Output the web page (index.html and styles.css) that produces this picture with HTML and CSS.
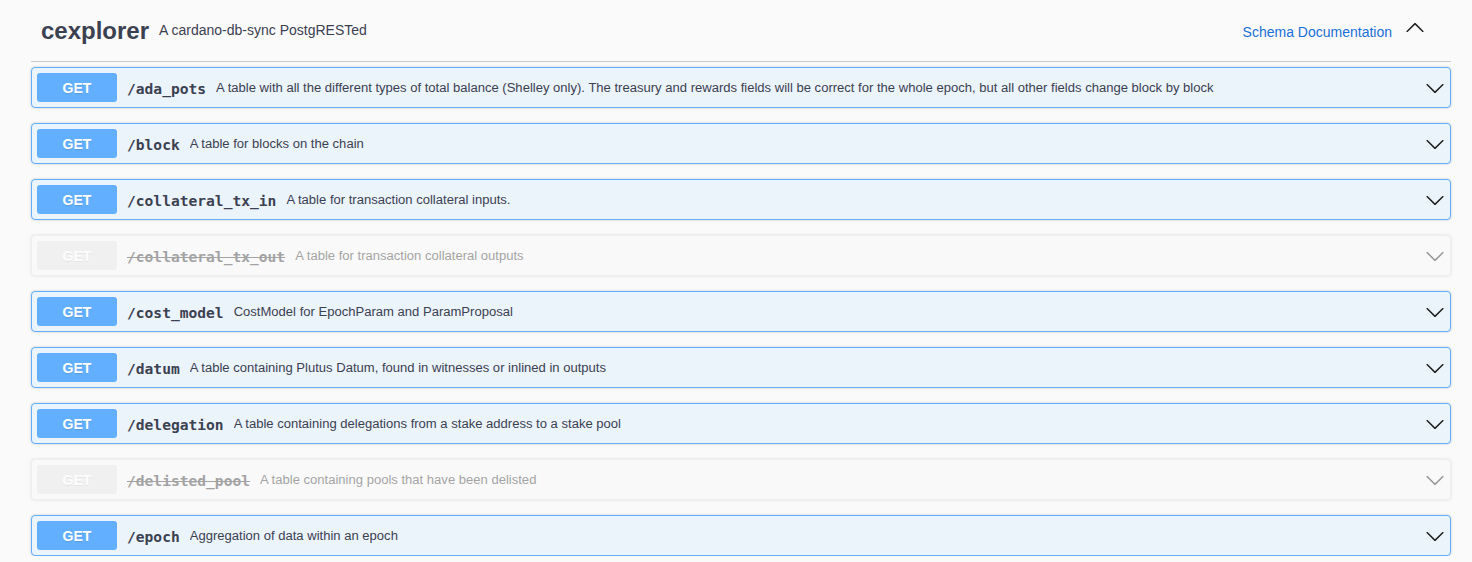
FILE: index.html
```html
<!DOCTYPE html>
<html>
<head>
<meta charset="utf-8">
<title>cexplorer</title>
<link rel="stylesheet" href="styles.css">
</head>
<body>
<div class="wrapper">
  <header class="topbar">
    <div class="info">
      <h2 class="title">cexplorer</h2>
      <span class="subtitle">A cardano-db-sync PostgRESTed</span>
    </div>
    <div class="actions">
      <a class="doclink" href="#">Schema Documentation</a>
      <svg class="chev-up" width="20" height="20" viewBox="0 0 20 20"><path d="M17.418 6.109c.272-.268.709-.268.979 0s.271.701 0 .969l-7.908 7.83c-.27.268-.707.268-.979 0l-7.908-7.83c-.27-.268-.27-.701 0-.969.271-.268.709-.268.979 0L10 13.25l7.418-7.141z"/></svg>
    </div>
  </header>

  <div class="ops">
    <div class="opblock">
      <div class="summary">
        <span class="method">GET</span>
        <span class="path">/ada_pots</span>
        <span class="desc">A table with all the different types of total balance (Shelley only). The treasury and rewards fields will be correct for the whole epoch, but all other fields change block by block</span>
        <svg class="arrow" width="20" height="20" viewBox="0 0 20 20"><path d="M17.418 6.109c.272-.268.709-.268.979 0s.271.701 0 .969l-7.908 7.83c-.27.268-.707.268-.979 0l-7.908-7.83c-.27-.268-.27-.701 0-.969.271-.268.709-.268.979 0L10 13.25l7.418-7.141z"/></svg>
      </div>
    </div>
    <div class="opblock">
      <div class="summary">
        <span class="method">GET</span>
        <span class="path">/block</span>
        <span class="desc">A table for blocks on the chain</span>
        <svg class="arrow" width="20" height="20" viewBox="0 0 20 20"><path d="M17.418 6.109c.272-.268.709-.268.979 0s.271.701 0 .969l-7.908 7.83c-.27.268-.707.268-.979 0l-7.908-7.83c-.27-.268-.27-.701 0-.969.271-.268.709-.268.979 0L10 13.25l7.418-7.141z"/></svg>
      </div>
    </div>
    <div class="opblock">
      <div class="summary">
        <span class="method">GET</span>
        <span class="path">/collateral_tx_in</span>
        <span class="desc">A table for transaction collateral inputs.</span>
        <svg class="arrow" width="20" height="20" viewBox="0 0 20 20"><path d="M17.418 6.109c.272-.268.709-.268.979 0s.271.701 0 .969l-7.908 7.83c-.27.268-.707.268-.979 0l-7.908-7.83c-.27-.268-.27-.701 0-.969.271-.268.709-.268.979 0L10 13.25l7.418-7.141z"/></svg>
      </div>
    </div>
    <div class="opblock deprecated">
      <div class="summary">
        <span class="method">GET</span>
        <span class="path">/collateral_tx_out</span>
        <span class="desc">A table for transaction collateral outputs</span>
        <svg class="arrow" width="20" height="20" viewBox="0 0 20 20"><path d="M17.418 6.109c.272-.268.709-.268.979 0s.271.701 0 .969l-7.908 7.83c-.27.268-.707.268-.979 0l-7.908-7.83c-.27-.268-.27-.701 0-.969.271-.268.709-.268.979 0L10 13.25l7.418-7.141z"/></svg>
      </div>
    </div>
    <div class="opblock">
      <div class="summary">
        <span class="method">GET</span>
        <span class="path">/cost_model</span>
        <span class="desc">CostModel for EpochParam and ParamProposal</span>
        <svg class="arrow" width="20" height="20" viewBox="0 0 20 20"><path d="M17.418 6.109c.272-.268.709-.268.979 0s.271.701 0 .969l-7.908 7.83c-.27.268-.707.268-.979 0l-7.908-7.83c-.27-.268-.27-.701 0-.969.271-.268.709-.268.979 0L10 13.25l7.418-7.141z"/></svg>
      </div>
    </div>
    <div class="opblock">
      <div class="summary">
        <span class="method">GET</span>
        <span class="path">/datum</span>
        <span class="desc">A table containing Plutus Datum, found in witnesses or inlined in outputs</span>
        <svg class="arrow" width="20" height="20" viewBox="0 0 20 20"><path d="M17.418 6.109c.272-.268.709-.268.979 0s.271.701 0 .969l-7.908 7.83c-.27.268-.707.268-.979 0l-7.908-7.830c-.27-.268-.27-.701 0-.969.271-.268.709-.268.979 0L10 13.25l7.418-7.141z"/></svg>
      </div>
    </div>
    <div class="opblock">
      <div class="summary">
        <span class="method">GET</span>
        <span class="path">/delegation</span>
        <span class="desc">A table containing delegations from a stake address to a stake pool</span>
        <svg class="arrow" width="20" height="20" viewBox="0 0 20 20"><path d="M17.418 6.109c.272-.268.709-.268.979 0s.271.701 0 .969l-7.908 7.83c-.27.268-.707.268-.979 0l-7.908-7.83c-.27-.268-.27-.701 0-.969.271-.268.709-.268.979 0L10 13.25l7.418-7.141z"/></svg>
      </div>
    </div>
    <div class="opblock deprecated">
      <div class="summary">
        <span class="method">GET</span>
        <span class="path">/delisted_pool</span>
        <span class="desc">A table containing pools that have been delisted</span>
        <svg class="arrow" width="20" height="20" viewBox="0 0 20 20"><path d="M17.418 6.109c.272-.268.709-.268.979 0s.271.701 0 .969l-7.908 7.83c-.27.268-.707.268-.979 0l-7.908-7.83c-.27-.268-.27-.701 0-.969.271-.268.709-.268.979 0L10 13.25l7.418-7.141z"/></svg>
      </div>
    </div>
    <div class="opblock">
      <div class="summary">
        <span class="method">GET</span>
        <span class="path">/epoch</span>
        <span class="desc">Aggregation of data within an epoch</span>
        <svg class="arrow" width="20" height="20" viewBox="0 0 20 20"><path d="M17.418 6.109c.272-.268.709-.268.979 0s.271.701 0 .969l-7.908 7.83c-.27.268-.707.268-.979 0l-7.908-7.83c-.27-.268-.27-.701 0-.969.271-.268.709-.268.979 0L10 13.25l7.418-7.141z"/></svg>
      </div>
    </div>
  </div>
</div>
</body>
</html>
```

FILE: styles.css
```css
html, body {
  margin: 0;
  padding: 0;
  background: #fafafa;
}
body {
  font-family: "Liberation Sans", Arial, sans-serif;
  color: #3b4151;
}
.wrapper {
  width: 1420px;
  padding: 0 21px 0 31px;
}
.topbar {
  display: flex;
  align-items: center;
  justify-content: space-between;
  height: 61px;
  padding: 0 26px 0 10px;
  border-bottom: 1px solid #c9c9c9;
  margin-bottom: 5px;
}
.info {
  display: flex;
  align-items: center;
}
.title {
  margin: 0;
  font-size: 24px;
  font-weight: bold;
  color: #3b4151;
  line-height: 28px;
}
.subtitle {
  font-size: 14px;
  margin-left: 10px;
  margin-top: -2px;
}
.actions {
  display: flex;
  align-items: center;
}
.doclink {
  font-size: 14px;
  color: #1b6fd6;
  text-decoration: none;
  margin-top: 2px;
  margin-right: 13px;
}
.chev-up {
  transform: rotate(180deg);
  margin-top: -6px;
  fill: #1c1c1c;
}
.ops {
  display: flex;
  flex-direction: column;
  gap: 15px;
}
.opblock {
  border: 1px solid #61affe;
  border-radius: 4px;
  background: #ebf3fb;
  box-shadow: 0 0 3px rgba(0, 0, 0, 0.19);
}
.summary {
  display: flex;
  align-items: center;
  padding: 5px;
  height: 29px;
}
.method {
  width: 80px;
  height: 29px;
  line-height: 31px;
  text-align: center;
  border-radius: 3px;
  background: #61affe;
  color: #fff;
  font-size: 14px;
  font-weight: bold;
  text-shadow: 0 1px 0 rgba(0, 0, 0, 0.1);
  flex: none;
}
.path {
  font-family: "DejaVu Sans Mono", "Liberation Mono", monospace;
  font-size: 14.6px;
  font-weight: bold;
  padding: 0 10px;
  color: #3b4151;
  white-space: nowrap;
  margin-top: 1px;
}
.desc {
  font-size: 13.05px;
  flex: 1;
  white-space: nowrap;
  overflow: hidden;
}
.arrow {
  flex: none;
  fill: #1c1c1c;
}
.opblock.deprecated {
  opacity: 0.6;
  border-color: #ebebeb;
  background: #f9f9f9;
}
.deprecated .method {
  background: #ebebeb;
}
.deprecated .path {
  text-decoration: line-through;
  color: #6b6b6b;
}
.deprecated .desc {
  color: #6b6b6b;
}
.deprecated .arrow {
  fill: #555;
}
```
